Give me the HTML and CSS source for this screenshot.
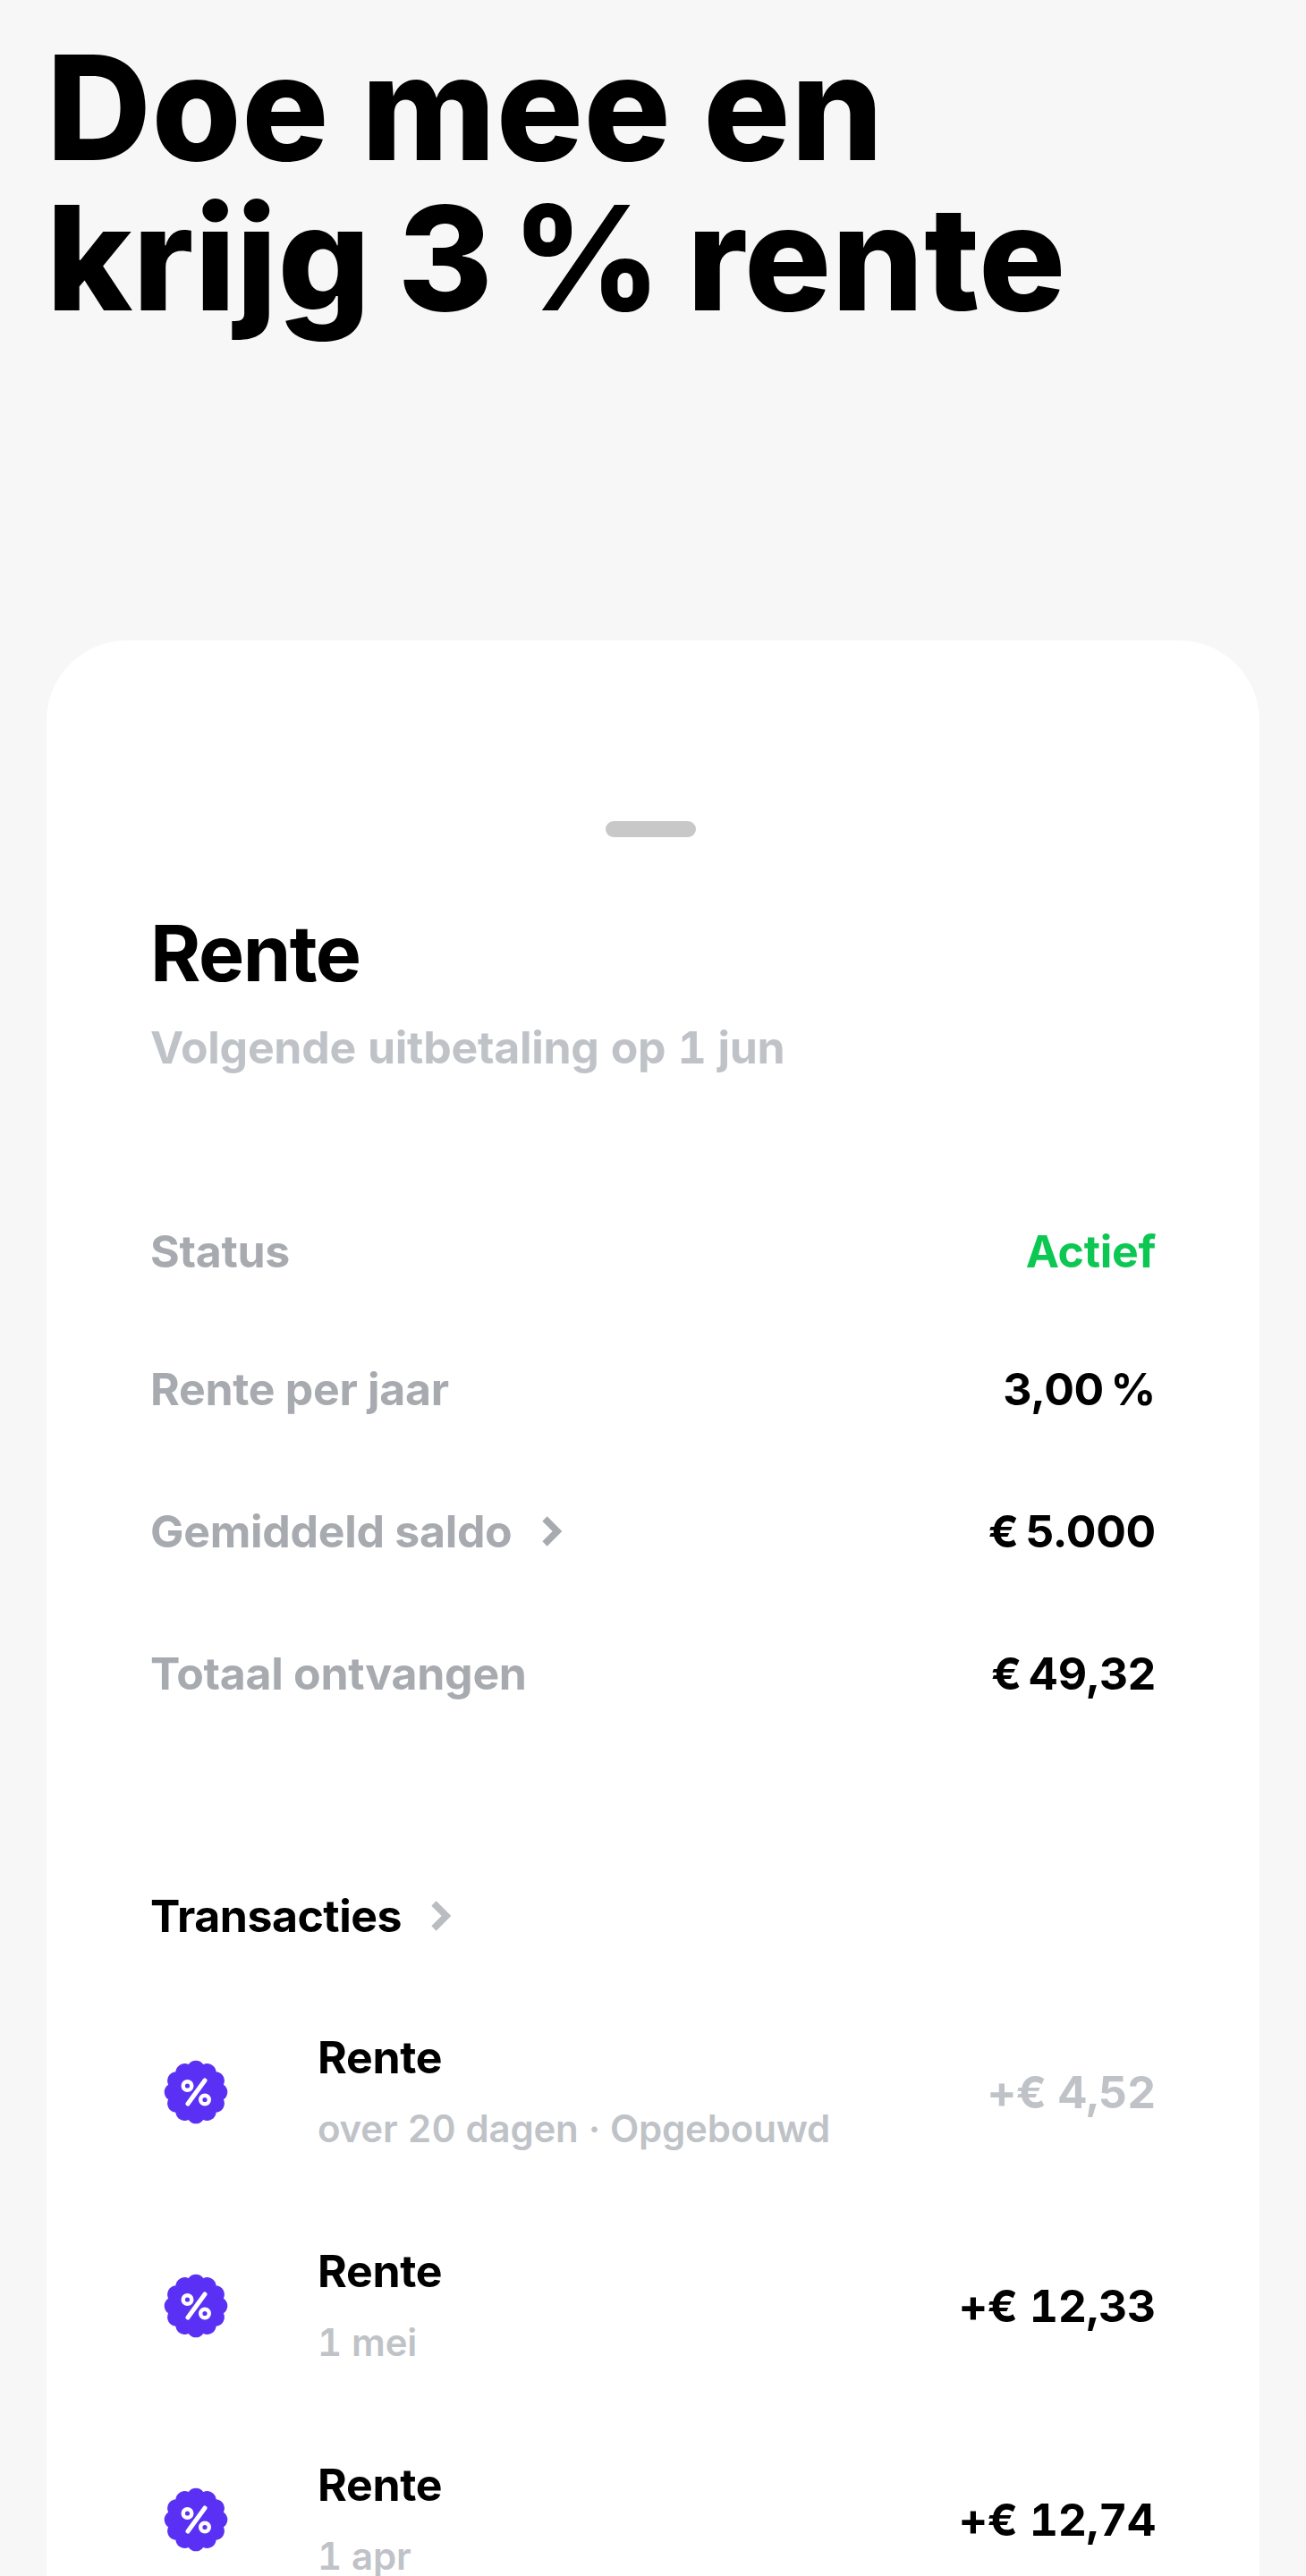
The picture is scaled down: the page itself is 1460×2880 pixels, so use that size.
FILE: index.html
```html
<!DOCTYPE html>
<html lang="nl">
<head>
    <meta charset="UTF-8">
    <meta name="viewport" content="width=device-width, initial-scale=1.0">
    <title>Rente</title>
    <link rel="stylesheet" href="styles.css">
</head>
<body>
    <h1 class="headline">Doe mee en<br>krijg <span class="tight">3 %</span> rente</h1>
    <div class="card">
        <div class="handle"></div>
        <h2 class="card-title">Rente</h2>
        <p class="card-sub">Volgende uitbetaling op 1 jun</p>

        <div class="stats">
            <div class="stat"><span class="stat-label">Status</span><span class="stat-active">Actief</span></div>
            <div class="stat"><span class="stat-label">Rente per jaar</span><span class="stat-value">3,00 %</span></div>
            <div class="stat">
                <span class="stat-label">Gemiddeld saldo
                    <svg class="chevron" viewBox="0 0 24 36"><path d="M4 4l14 14L4 32"/></svg>
                </span>
                <span class="stat-value">€ 5.000</span>
            </div>
            <div class="stat"><span class="stat-label">Totaal ontvangen</span><span class="stat-value">€ 49,32</span></div>
        </div>

        <div class="section-title">Transacties
            <svg class="chevron light" viewBox="0 0 24 36"><path d="M4 4l14 14L4 32"/></svg>
        </div>

        <svg class="defs" width="0" height="0">
            <symbol id="badge" viewBox="-36 -36 72 72">
                <path fill="#5a31f4" d="M-8.28 -30.91A10 10 0 0 1 8.28 -30.91A10 10 0 0 1 22.63 -22.63A10 10 0 0 1 30.91 -8.28A10 10 0 0 1 30.91 8.28A10 10 0 0 1 22.63 22.63A10 10 0 0 1 8.28 30.91A10 10 0 0 1 -8.28 30.91A10 10 0 0 1 -22.63 22.63A10 10 0 0 1 -30.91 8.28A10 10 0 0 1 -30.91 -8.28A10 10 0 0 1 -22.63 -22.63A10 10 0 0 1 -8.28 -30.91Z"/>
                <path stroke="#fff" stroke-width="5" stroke-linecap="round" d="M10 -13L-9 13"/>
                <circle cx="-9.5" cy="-7" r="4.8" fill="none" stroke="#fff" stroke-width="4.4"/>
                <circle cx="10" cy="8.5" r="4.8" fill="none" stroke="#fff" stroke-width="4.4"/>
            </symbol>
        </svg>

        <div class="tx">
            <svg class="tx-icon"><use href="#badge"/></svg>
            <div class="tx-body">
                <div class="tx-name">Rente</div>
                <div class="tx-date">over 20 dagen · Opgebouwd</div>
            </div>
            <div class="tx-amount pending">+€ 4,52</div>
        </div>
        <div class="tx">
            <svg class="tx-icon"><use href="#badge"/></svg>
            <div class="tx-body">
                <div class="tx-name">Rente</div>
                <div class="tx-date">1 mei</div>
            </div>
            <div class="tx-amount">+€ 12,33</div>
        </div>
        <div class="tx">
            <svg class="tx-icon"><use href="#badge"/></svg>
            <div class="tx-body">
                <div class="tx-name">Rente</div>
                <div class="tx-date">1 apr</div>
            </div>
            <div class="tx-amount">+€ 12,74</div>
        </div>
    </div>
</body>
</html>
```

FILE: styles.css
```css
html, body {
    height: 2880px;
}
body {
    font-family: Inter, "Liberation Sans", sans-serif;
    background-color: #f7f7f7;
    color: #000;
    margin: 0;
    padding: 0 52px;
    overflow: hidden;
}
.headline {
    font-size: 162px;
    font-weight: 800;
    line-height: 168px;
    letter-spacing: 0.5px;
    margin: 0;
    padding-top: 36px;
    height: 716px;
    box-sizing: border-box;
}
.tight {
    letter-spacing: -7px;
    margin-left: -6px;
}
.card {
    background-color: #fff;
    border-radius: 90px 90px 0 0;
    padding: 202px 116px 0;
    height: 2164px;
    box-sizing: border-box;
}
.handle {
    width: 101px;
    height: 18px;
    border-radius: 9px;
    background-color: #c8c8c8;
    margin-left: 509px;
}
.card-title {
    font-size: 86px;
    font-weight: 700;
    line-height: 100px;
    letter-spacing: -1.5px;
    margin: 80px 0 0;
}
.card-sub {
    font-size: 50px;
    font-weight: 700;
    line-height: 60px;
    letter-spacing: -0.3px;
    color: #bfc3c8;
    margin: 25px 0 0;
    font-variant-numeric: tabular-nums;
}
.stats {
    margin-top: 124px;
}
.stat {
    display: flex;
    justify-content: space-between;
    align-items: center;
    height: 159px;
    font-size: 50px;
    font-weight: 700;
    letter-spacing: -0.3px;
}
.stat:first-child {
    height: 148px;
}
.stat-label {
    color: #a7abb0;
    display: flex;
    align-items: center;
    gap: 32px;
}
.stat-value {
    color: #000;
    word-spacing: -4px;
}
.stat-active {
    color: #0cc853;
}
.chevron {
    width: 24px;
    height: 36px;
    fill: none;
    stroke: #a7abb0;
    stroke-width: 7.5;
}
.light {
    stroke: #b9bcc0;
}
.section-title {
    display: flex;
    align-items: center;
    gap: 32px;
    font-size: 50px;
    font-weight: 700;
    line-height: 60px;
    letter-spacing: -0.5px;
    margin: 162px 0 47px;
}
.defs {
    position: absolute;
}
.tx {
    display: flex;
    align-items: center;
    height: 239px;
}
.tx-icon {
    width: 72px;
    height: 72px;
    margin: 0 100px 0 15px;
    flex-shrink: 0;
}
.tx-body {
    flex: 1;
}
.tx-name {
    font-size: 50px;
    font-weight: 700;
    line-height: 58px;
    letter-spacing: -0.3px;
}
.tx-date {
    font-size: 42px;
    font-weight: 600;
    line-height: 52px;
    letter-spacing: -0.2px;
    color: #bfc3c8;
    margin-top: 25px;
    font-variant-numeric: tabular-nums;
}
.tx-amount {
    font-size: 50px;
    font-weight: 700;
    letter-spacing: -0.3px;
    font-variant-numeric: tabular-nums;
}
.pending {
    color: #bfc3c8;
}
```
